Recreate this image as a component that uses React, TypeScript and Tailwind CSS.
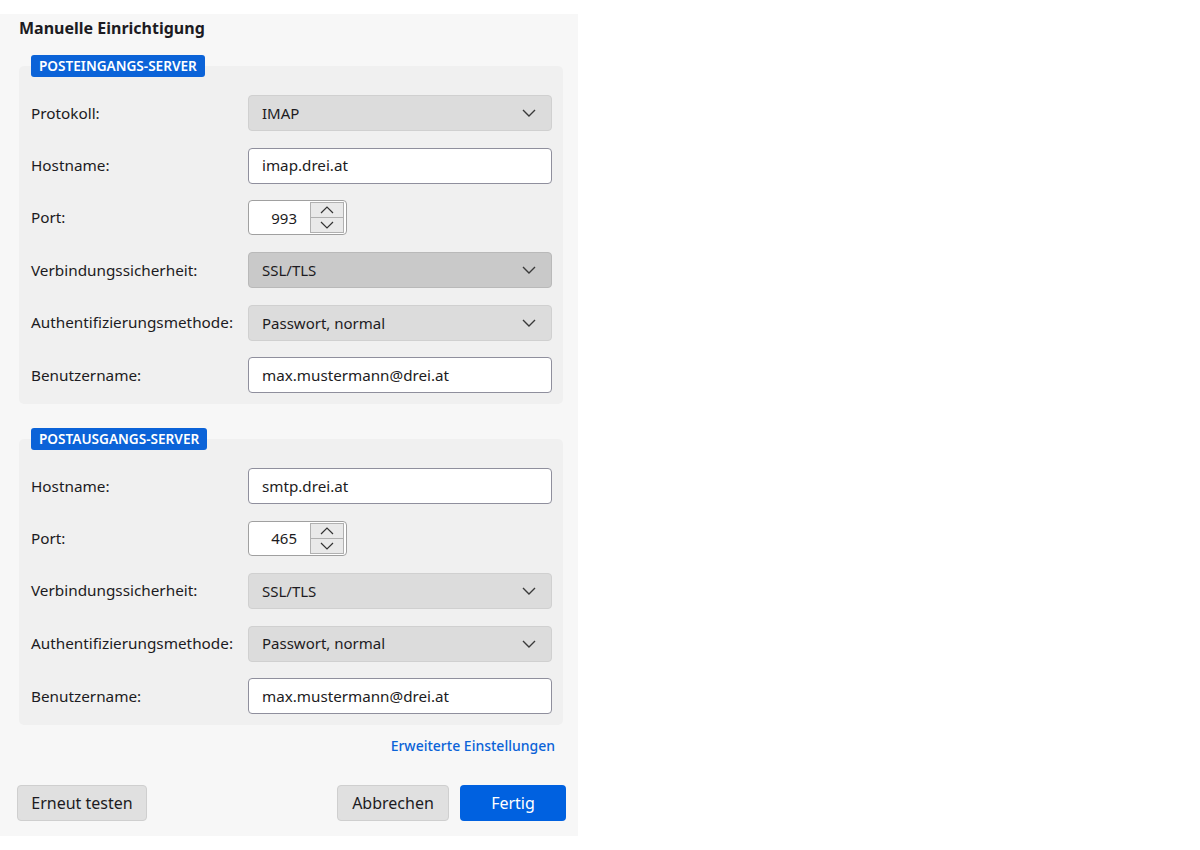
import React from "react";

const font = { fontFamily: '"Noto Sans", "Open Sans", sans-serif' };

function Chevron() {
  return (
    <svg width="14" height="8" viewBox="0 0 14 8" className="text-[#3a3a3a]">
      <path d="M1 1 L7 7 L13 1" fill="none" stroke="currentColor" strokeWidth="1.4" />
    </svg>
  );
}

function SelectBox({ value, active }: { value: string; active?: boolean }) {
  return (
    <div
      className={`flex h-9 w-[304px] items-center justify-between rounded-[4px] border pl-[13px] pr-[15px] text-[15px] text-[#1c1b22] ${
        active ? "border-[#b9b9b9] bg-[#c9c9c9]" : "border-[#d0d0d0] bg-[#dcdcdc]"
      }`}
    >
      <span>{value}</span>
      <Chevron />
    </div>
  );
}

function TextBox({ value }: { value: string }) {
  return (
    <div className="flex h-9 w-[304px] items-center rounded-[4px] border border-[#8f8f9d] bg-white pl-[13px] text-[15.2px] text-[#1c1b22]">
      {value}
    </div>
  );
}

function PortBox({ value }: { value: string }) {
  return (
    <div className="flex h-[35px] w-[99px] items-center rounded-[4px] border border-[#a0a0a0] bg-white py-[1px] pr-[2px]">
      <span className="flex-1 pr-[13px] text-right text-[15px] text-[#1c1b22]">{value}</span>
      <div className="flex h-full w-[34px] flex-col border border-[#b0b0b0] bg-[#e9e9e9]">
        <div className="flex flex-1 items-center justify-center border-b border-[#b0b0b0]">
          <svg width="14" height="8" viewBox="0 0 14 8">
            <path d="M1 7 L7 1 L13 7" fill="none" stroke="#333" strokeWidth="1.2" />
          </svg>
        </div>
        <div className="flex flex-1 items-center justify-center">
          <svg width="14" height="8" viewBox="0 0 14 8">
            <path d="M1 1 L7 7 L13 1" fill="none" stroke="#333" strokeWidth="1.2" />
          </svg>
        </div>
      </div>
    </div>
  );
}

function Row({ label, children }: { label: string; children: React.ReactNode }) {
  return (
    <div className="flex items-center">
      <span className="w-[217px] text-[15.3px] text-[#1c1b22]">{label}</span>
      {children}
    </div>
  );
}

function Section({ title, children }: { title: string; children: React.ReactNode }) {
  return (
    <div className="flex flex-col">
      <div className="relative z-10 ml-[12px] self-start rounded-[3px] bg-[#0b63d8] px-[8px] py-[2px] text-[13.6px] font-semibold leading-[18px] text-white">
        {title}
      </div>
      <div className="-mt-[11px] flex w-[544px] flex-col gap-[16.7px] rounded-[5px] bg-[#f0f0f0] pb-[11px] pl-[12px] pt-[29px]">
        {children}
      </div>
    </div>
  );
}

export default function App() {
  return (
    <div className="h-[850px] w-full bg-white pt-[14px]" style={font}>
      <div className="flex h-[822px] w-[578px] flex-col bg-[#f7f7f7] px-[19px] pt-[4px]">
        <h1 className="text-[16px] font-bold leading-[20px] text-[#1c1b22]">Manuelle Einrichtigung</h1>

        <div className="mt-[17px]">
          <Section title="POSTEINGANGS-SERVER">
            <Row label="Protokoll:">
              <SelectBox value="IMAP" />
            </Row>
            <Row label="Hostname:">
              <TextBox value="imap.drei.at" />
            </Row>
            <Row label="Port:">
              <PortBox value="993" />
            </Row>
            <Row label="Verbindungssicherheit:">
              <SelectBox value="SSL/TLS" active />
            </Row>
            <Row label="Authentifizierungsmethode:">
              <SelectBox value="Passwort, normal" />
            </Row>
            <Row label="Benutzername:">
              <TextBox value="max.mustermann@drei.at" />
            </Row>
          </Section>
        </div>

        <div className="mt-[24px]">
          <Section title="POSTAUSGANGS-SERVER">
            <Row label="Hostname:">
              <TextBox value="smtp.drei.at" />
            </Row>
            <Row label="Port:">
              <PortBox value="465" />
            </Row>
            <Row label="Verbindungssicherheit:">
              <SelectBox value="SSL/TLS" />
            </Row>
            <Row label="Authentifizierungsmethode:">
              <SelectBox value="Passwort, normal" />
            </Row>
            <Row label="Benutzername:">
              <TextBox value="max.mustermann@drei.at" />
            </Row>
          </Section>
        </div>

        <div className="mt-[10px] flex w-[536px] justify-end">
          <span className="text-[14px] font-medium text-[#0b63d8]">Erweiterte Einstellungen</span>
        </div>

        <div className="mt-[29px] -ml-[2px] flex w-[549px] items-center">
          <button className="h-9 w-[130px] rounded-[4px] border border-[#cfcfcf] bg-[#e0e0e0] text-[16px] text-[#1c1b22]">
            Erneut testen
          </button>
          <div className="flex-1" />
          <button className="h-9 w-[112px] rounded-[4px] border border-[#cfcfcf] bg-[#e0e0e0] text-[16px] text-[#1c1b22]">
            Abbrechen
          </button>
          <button className="ml-[11px] h-9 w-[106px] rounded-[4px] bg-[#0061e0] text-[16px] text-white">
            Fertig
          </button>
        </div>
      </div>
    </div>
  );
}
